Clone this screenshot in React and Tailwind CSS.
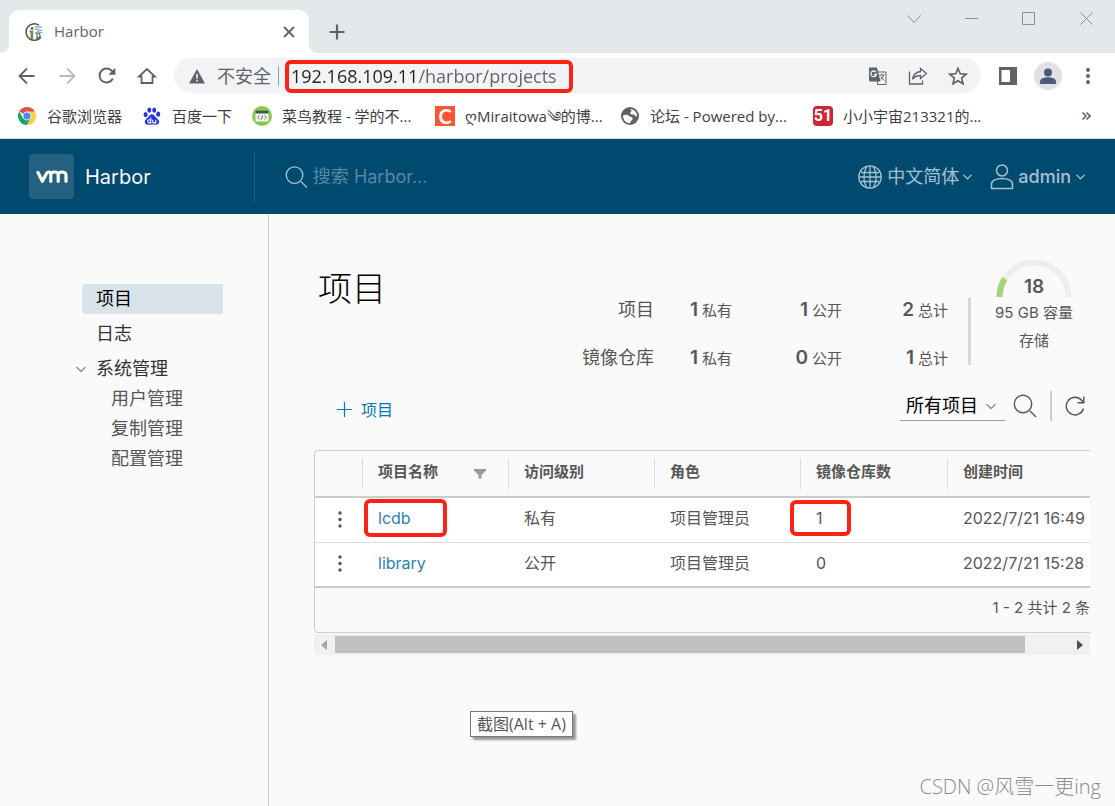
import { useState } from 'react'
import clsx from 'clsx'

const BOOKMARKS = [
  { icon: <ChromeIcon />, label: '谷歌浏览器' },
  { icon: <BaiduIcon />, label: '百度一下' },
  { icon: <RunoobIcon />, label: '菜鸟教程 - 学的不...' },
  { icon: <span className="flex h-5 w-5 shrink-0 items-center justify-center bg-[#fc5531] font-['Lato'] text-xl leading-5 font-bold text-white">C</span>, label: 'ღMiraitowa༄的博...' },
  { icon: <WorldIcon />, label: '论坛 - Powered by...' },
  { icon: <span className="flex h-5 w-5 shrink-0 items-center justify-center rounded-sm bg-[#cf2535] font-['Roboto'] text-base font-bold text-white">51</span>, label: '小小宇宙213321的...' },
]

const STATS = [
  { label: '项目', values: [1, 1, 2] },
  { label: '镜像仓库', values: [1, 0, 1] },
]

const PROJECTS = [
  { name: 'lcdb', access: '私有', role: '项目管理员', repos: 1, created: '2022/7/21 16:49', marked: true },
  { name: 'library', access: '公开', role: '项目管理员', repos: 0, created: '2022/7/21 15:28' },
]

const SUB_MENU = ['用户管理', '复制管理', '配置管理']

function ChromeIcon() {
  return (
    <svg viewBox="0 0 20 20" className="h-5 w-5 shrink-0">
      <path d="M10 10 L2.2 5.5 A9 9 0 0 1 17.8 5.5 Z" fill="#de5145" />
      <path d="M2.2 5.5 A9 9 0 0 0 10 19 L13.9 12.2 L6.1 12.2 Z" fill="#1da362" />
      <path d="M17.8 5.5 A9 9 0 0 1 10 19 L13.9 12.2 L10 5.5 Z" fill="#ffcd45" />
      <circle cx="10" cy="10" r="4.4" fill="#f1f1f1" />
      <circle cx="10" cy="10" r="3.5" fill="#4a8af4" />
    </svg>
  )
}

function BaiduIcon() {
  return (
    <svg viewBox="0 0 20 20" className="h-5 w-5 shrink-0" fill="#2a32e0">
      <ellipse cx="3.6" cy="8.6" rx="2" ry="2.6" />
      <ellipse cx="7.3" cy="4.1" rx="2" ry="2.7" />
      <ellipse cx="12.2" cy="4.1" rx="2" ry="2.7" />
      <ellipse cx="16.2" cy="8.2" rx="2" ry="2.6" />
      <path d="M9.9 8.2c2.2 0 2.9 2 4.2 3.3 1.3 1.3 3 2.3 3 4.3 0 2.1-1.6 3-3.5 2.9-1.3-.1-2.3-.3-3.7-.3s-2.4.3-3.7.3c-1.9 0-3.4-.9-3.4-2.9s1.7-3 3-4.3c1.3-1.3 1.9-3.3 4.1-3.3z" />
      <path d="M8.8 11.5v5.4H7.2a1.5 1.5 0 0 1 0-3h1.5M10.8 13.7v2.2q0 1 1 1h2v-3.2" fill="none" stroke="#fff" strokeWidth="1.1" />
    </svg>
  )
}

function RunoobIcon() {
  return (
    <svg viewBox="0 0 20 20" className="h-5 w-5 shrink-0">
      <circle cx="10" cy="10" r="10" fill="#8cc84b" />
      <rect x="3.5" y="4.5" width="13" height="11" rx="1" fill="#f0f4ea" />
      <path d="M3.5 7.4V5.5a1 1 0 0 1 1-1h11a1 1 0 0 1 1 1v1.9z" fill="#3b5757" />
      <path d="M7.5 9.5 5.5 11.4l2 1.9M12.5 9.5l2 1.9-2 1.9M10.7 9.3l-1.4 4.2" fill="none" stroke="#5d6d6d" />
    </svg>
  )
}

function WorldIcon() {
  return (
    <svg viewBox="0 0 20 20" className="h-5 w-5 shrink-0">
      <circle cx="10" cy="10" r="9" fill="#5f6368" />
      <path d="M3 9.5c1.5-.8 3.5-.8 5-.3 1.4.4 1.6 1.6 3 1.8 1.3.2 2 1 1.6 2.2-.3.9-1.3 1-1.7 2-.3.7-.6 1.5-1.3 2.1-3.6-.3-6.5-3.2-6.6-7.8z" fill="#fff" />
      <path d="M10.5 3c2.5.2 4.8 1.7 5.9 4 .5 1.2.7 2.2.6 3.4-1 .3-2-.1-2.3-1.1-.3-1-1.2-.8-2.2-.8-1.3 0-2.5-.6-2.3-1.8.1-.9 1.2-.9 1.3-1.7.1-.8-.9-.9-1-2z" fill="#fff" />
    </svg>
  )
}

function HarborIcon() {
  return (
    <svg viewBox="0 0 20 20" className="h-5 w-5" fill="none">
      <path d="M15 3.200A8.300 8.300 0 1 0 17 15" stroke="#4d4f52" strokeWidth="1.500" />
      <circle cx="8" cy="6.300" r="1.500" fill="#5a7a50" />
      <path d="M5.500 8.500h3.700V17H6.500v-6.500h-1z" fill="#5a9a45" />
      <path d="M11 5.500c2-2.500 4 1 7-.8M11 7.500c2.500-1.500 4 1.500 7.500 1M13 9c2 1.500 3 1.500 5.500 2" stroke="#7aa3cc" strokeWidth="1.100" />
      <path d="M11 11h2.500a2 2 0 0 1 0 5H12M13 11v6" stroke="#5b6a60" strokeWidth="1.200" />
    </svg>
  )
}

function Chevron({ className }) {
  return (
    <svg viewBox="0 0 12 12" className={className} fill="none" stroke="currentColor" strokeWidth="1.3">
      <path d="M1.5 4 6 8.5 10.5 4" />
    </svg>
  )
}

function SearchIcon() {
  return (
    <svg viewBox="0 0 24 24" className="h-6 w-6" fill="none" stroke="currentColor" strokeWidth="1.4">
      <circle cx="10" cy="10" r="8.7" />
      <path d="m17 17 6 6" />
    </svg>
  )
}

function RedBox({ className }) {
  return <span className={clsx('pointer-events-none absolute rounded-md border-4 border-[#fc2216]', className)} />
}

function TabStrip() {
  return (
    <div className="flex h-[53px] items-start bg-[#e5e8eb] text-[#5f6368]">
      <div className="flex h-2 w-[9px] shrink-0 self-end bg-white">
        <div className="h-full w-full rounded-br-lg bg-[#e5e8eb]" />
      </div>
      <div className="mt-[10px] flex h-[43px] w-[300px] items-center rounded-t-[10px] bg-white pr-[11px] pl-[15px]">
        <HarborIcon />
        <span className="ml-[10px] flex-1 text-[15px]">Harbor</span>
        <button aria-label="Close tab" className="p-[3px]">
          <svg viewBox="0 0 12 12" className="h-3 w-3" stroke="currentColor" strokeWidth="1.8">
            <path d="m1 1 10 10M11 1 1 11" />
          </svg>
        </button>
      </div>
      <div className="flex h-2 w-2 shrink-0 self-end bg-white">
        <div className="h-full w-full rounded-bl-lg bg-[#e5e8eb]" />
      </div>
      <button aria-label="New tab" className="mt-6 ml-3">
        <svg viewBox="0 0 16 16" className="h-4 w-4" stroke="currentColor" strokeWidth="2.2">
          <path d="M8 0.5v15M0.5 8h15" />
        </svg>
      </button>
      <div className="mt-3 mr-[21px] ml-auto flex gap-11 text-[#8b8e91]">
        <button aria-label="Search tabs">
          <svg viewBox="0 0 14 14" className="h-[14px] w-[14px]" fill="none" stroke="currentColor">
            <path d="M0.5 3.5 7 10.5 13.5 3.5" />
          </svg>
        </button>
        <button aria-label="Minimize">
          <svg viewBox="0 0 13 14" className="h-[14px] w-[13px]" stroke="currentColor"><path d="M0 6.5h13" /></svg>
        </button>
        <button aria-label="Maximize">
          <svg viewBox="0 0 14 14" className="h-[14px] w-[14px]" fill="none" stroke="currentColor"><path d="M0.5 0.5h12v12H0.5z" /></svg>
        </button>
        <button aria-label="Close">
          <svg viewBox="0 0 14 14" className="h-[14px] w-[14px]" stroke="currentColor"><path d="M0.5 0.5l12 12M12.5 0.5l-12 12" /></svg>
        </button>
      </div>
    </div>
  )
}

function AddressBar() {
  const [url, setUrl] = useState('192.168.109.11/harbor/projects')

  return (
    <div className="flex h-[45px] items-center bg-white pr-[18px] pl-[17px] text-[#5f6368]">
      <div className="flex gap-5">
        <button aria-label="Back">
          <svg viewBox="0 0 20 20" className="h-5 w-5" fill="none" stroke="currentColor" strokeWidth="1.8"><path d="M17.5 10H3M10 2.5 2.5 10l7.5 7.5" /></svg>
        </button>
        <button aria-label="Forward" className="text-[#babcbe]">
          <svg viewBox="0 0 20 20" className="h-5 w-5" fill="none" stroke="currentColor" strokeWidth="1.8"><path d="M2.5 10H17M10 2.5 17.5 10 10 17.5" /></svg>
        </button>
        <button aria-label="Reload">
          <svg viewBox="0 0 20 20" className="h-5 w-5" fill="none" stroke="currentColor" strokeWidth="1.9">
            <path d="M15.9 12.5A7 7 0 1 1 15.3 5.4" />
            <path d="M18.4 1.8v7h-7z" fill="currentColor" stroke="none" />
          </svg>
        </button>
        <button aria-label="Home">
          <svg viewBox="0 0 20 20" className="h-5 w-5" fill="none" stroke="currentColor" strokeWidth="1.8"><path d="M2 10.5 10 3l8 7.500h-2.500V17h-11v-6.500z" /></svg>
        </button>
      </div>
      <div className="ml-[17px] flex h-[35px] flex-1 items-center rounded-full bg-[#f1f3f4] pr-[13px] pl-[14px]">
        <svg viewBox="0 0 18 18" className="h-[18px] w-[18px]">
          <path d="M9 2 17 16.5H1z" fill="#5f6368" />
          <path d="M9 7v4.5M9 12.8v1.7" stroke="#f1f3f4" strokeWidth="1.6" />
        </svg>
        <span className="ml-[11px] text-lg">不安全</span>
        <span className="ml-[7px] h-5 w-px bg-[#9aa0a6]" />
        <div className="relative ml-3 flex-1">
          <input
            aria-label="Address"
            value={url}
            onChange={(e) => setUrl(e.target.value)}
            className="w-full bg-[linear-gradient(to_right,#202124_127px,#5f6368_127px)] bg-clip-text text-lg text-transparent outline-none"
          />
          <RedBox className="-top-[2px] -left-[6px] h-[33px] w-[288px]" />
        </div>
        <div className="flex gap-5">
          <button aria-label="Translate">
            <svg viewBox="0 0 20 20" className="h-5 w-5" fill="none" stroke="currentColor">
              <path d="M9 6h9v12.5h-8.5z" />
              <path d="M1 1.5h8l3.5 14H2.5A1.5 1.5 0 0 1 1 14z" fill="#5f6368" stroke="none" />
              <path d="M8 6.2A2.8 2.8 0 1 0 8.4 8.5H6" stroke="#f1f3f4" strokeWidth="1.3" />
              <path d="M11.5 9h5M14 7.8V9M15.8 9c-.5 2-2 3.5-3.3 4.3M12.7 10.5l3.5 4" />
            </svg>
          </button>
          <button aria-label="Share">
            <svg viewBox="0 0 20 20" className="h-5 w-5" fill="none" stroke="currentColor" strokeWidth="1.3">
              <path d="M1.5 5.5v12.5h13v-3.5" />
              <path d="M12.5 2.5 18.5 7.5l-6 5V9.5c-3.5 0-6 1-8 3.8.8-4.2 3.3-7.3 8-7.8z" />
            </svg>
          </button>
          <button aria-label="Bookmark">
            <svg viewBox="0 0 20 20" className="h-5 w-5" fill="none" stroke="currentColor" strokeWidth="1.7">
              <path d="M10 2.5l2.3 5.3 5.7.5-4.3 3.8 1.3 5.6L10 14.7l-5 3 1.3-5.6L2 8.3l5.7-.5z" />
            </svg>
          </button>
        </div>
      </div>
      <button aria-label="Side panel" className="ml-[18px]">
        <svg viewBox="0 0 18 18" className="h-[18px] w-[18px]">
          <path d="M0 0h18v18H0z" fill="#5f6368" />
          <path d="M2.5 3h8.5v12H2.5z" fill="#fff" />
        </svg>
      </button>
      <button aria-label="Profile" className="ml-[17px]">
        <svg viewBox="0 0 28 28" className="h-7 w-7">
          <circle cx="14" cy="14" r="14" fill="#dee1e6" />
          <circle cx="14" cy="10.5" r="4" fill="#4c5a74" />
          <path d="M6 22v-2.5c0-3 5-4.2 8-4.2s8 1.2 8 4.2V22z" fill="#4c5a74" />
        </svg>
      </button>
      <button aria-label="Menu" className="ml-[17px]">
        <svg viewBox="0 0 18 18" className="h-[18px] w-[18px]" fill="currentColor">
          <circle cx="9" cy="3" r="2" />
          <circle cx="9" cy="9" r="2" />
          <circle cx="9" cy="15" r="2" />
        </svg>
      </button>
    </div>
  )
}

function Bookmarks() {
  return (
    <div className="flex h-[41px] items-center border-b border-[#d5d8db] bg-white pr-6 pb-1 pl-[17px] text-[15px] text-[#3c4043]">
      <div className="grid grid-cols-[105px_90px_163px_165px_173px_auto] gap-5">
        {BOOKMARKS.map((b) => (
          <a key={b.label} href="#" className="flex items-center gap-[10px] whitespace-nowrap">
            {b.icon}
            {b.label}
          </a>
        ))}
      </div>
      <button aria-label="More bookmarks" className="ml-auto">
        <svg viewBox="0 0 10 10" className="h-[10px] w-[10px]" fill="none" stroke="#5f6368" strokeWidth="1.6">
          <path d="M1.5 1.5 5 5 1.5 8.5M5.5 1.5 9 5 5.5 8.5" />
        </svg>
      </button>
    </div>
  )
}

function HarborHeader() {
  return (
    <header className="flex h-[75px] items-center bg-[#004a70] pr-[29px] pl-[29px] text-lg text-[#a6c1ce]">
      <a href="#" className="flex w-[225px] items-center text-xl text-[#fafafa]">
        <span className="mr-[11px] flex h-[45px] w-[45px] items-center justify-center rounded bg-[#24607f]">
          <svg viewBox="0 0 32 14" className="h-[14px] w-8" fill="none" stroke="#fff" strokeWidth="3.2" strokeLinecap="round" strokeLinejoin="round">
            <path d="M2 2.5 6.4 11.3 10.5 3.5Q11.3 2 13 2 14.8 2 14.8 4.500V11.300M14.800 5Q14.800 2 18.500 2T22.200 5V11.300M22.200 5Q22.200 2 26 2T30 5V11.300" />
          </svg>
        </span>
        Harbor
      </a>
      <div className="flex h-[50px] flex-1 items-center border-l border-[#1d5e80] pl-[30px]">
        <SearchIcon />
        <input aria-label="搜索" placeholder="搜索 Harbor..." className="ml-[5px] w-full outline-none placeholder:text-[#5589a3]" />
      </div>
      <button className="flex items-center">
        <svg viewBox="0 0 24 24" className="h-6 w-6" fill="none" stroke="currentColor" strokeWidth="1.3">
          <circle cx="12" cy="12" r="11.2" />
          <path d="M12 1v22M3 7.5h18M1 12h22M3 16.5h18M9 1.3C5 7 5 17 9 22.7M15 1.3c4 5.7 4 15.7 0 21.4" />
        </svg>
        <span className="ml-[5px] whitespace-nowrap">中文简体</span>
        <Chevron className="ml-[3px] h-[11px] w-[11px]" />
      </button>
      <button className="ml-[17px] flex items-center">
        <svg viewBox="0 0 24 26" className="h-[26px] w-6" fill="none" stroke="currentColor" strokeWidth="1.5">
          <circle cx="12" cy="6.5" r="5.5" />
          <path d="M1.5 24.5v-4.5c0-3.5 5-5.5 10.5-5.5s10.5 2 10.5 5.5v4.5z" strokeLinejoin="round" />
        </svg>
        <span className="ml-1 font-medium">admin</span>
        <Chevron className="ml-1 h-[11px] w-[11px]" />
      </button>
    </header>
  )
}

function Sidebar() {
  return (
    <nav className="w-[269px] shrink-0 border-r border-[#ccc] pt-[70px] pr-[45px] pl-[75px] text-lg leading-[30px] text-[#313131]">
      <a href="#" className="ml-[7px] block rounded-l-[4px] bg-[#d9e4ea] pl-[14px] text-black">项目</a>
      <a href="#" className="mt-[5px] block pl-[21px]">日志</a>
      <button className="mt-[5px] flex items-center">
        <Chevron className="mr-[9px] h-3 w-3 text-[#8c8c8c]" />
        系统管理
      </button>
      {SUB_MENU.map((item) => (
        <a key={item} href="#" className="block pl-[36px] text-[#565656]">{item}</a>
      ))}
    </nav>
  )
}

function Stat({ value, label }) {
  return (
    <div className="flex items-baseline justify-end gap-1 text-[15px]">
      <span className="text-[19px] font-semibold">{value}</span>
      {label}
    </div>
  )
}

function Summary() {
  return (
    <div className="flex items-start justify-between pr-[14px]">
      <h1 className="mt-[5px] ml-1 text-[34px] leading-[50px] font-light text-black">项目</h1>
      <div className="flex">
        <div className="mt-[27px]">
          {STATS.map((s) => (
            <div key={s.label} className="grid h-12 grid-cols-[80px_78px_110px_106px] items-center">
              <span className="text-right text-lg">{s.label}</span>
              <Stat value={s.values[0]} label="私有" />
              <Stat value={s.values[1]} label="公开" />
              <Stat value={s.values[2]} label="总计" />
            </div>
          ))}
        </div>
        <div className="mt-[39px] ml-5 h-[67px] w-[3px] bg-[#d8d8d8]" />
        <div className="ml-[21px] w-[84px] text-center text-[15px] leading-7 whitespace-nowrap">
          <div className="relative">
            <svg viewBox="0 0 76 38" className="mx-auto h-[38px] w-[76px]" fill="none" strokeWidth="6">
              <path d="M3.5 38A34.5 34.5 0 0 1 72.5 38" stroke="#eee" />
              <path d="M3.5 38A34.5 34.5 0 0 1 8.8 19.6" stroke="#a5d577" />
            </svg>
            <span className="absolute inset-x-0 bottom-0 text-[19px] leading-5 font-semibold">18</span>
          </div>
          <div className="mt-[2px]">95 GB 容量</div>
          <div>存储</div>
        </div>
      </div>
    </div>
  )
}

function Toolbar() {
  return (
    <div className="mt-[6px] flex h-9 items-center justify-between">
      <button className="flex items-center pt-[7px] pl-[23px] text-base text-[#0079b8]">
        <svg viewBox="0 0 15 15" className="mr-[9px] h-[15px] w-[15px]" stroke="currentColor" strokeWidth="1.2"><path d="M7.5 0v15M0 7.5h15" /></svg>
        项目
      </button>
      <div className="flex items-center text-[#565656]">
        <div className="relative mr-2 w-[105px] border-b border-[#9a9a9a]">
          <select aria-label="项目筛选" className="w-full appearance-none pl-[6px] text-lg text-black outline-none">
            <option>所有项目</option>
          </select>
          <Chevron className="pointer-events-none absolute top-2 right-2 h-3 w-3 text-[#8c8c8c]" />
        </div>
        <button aria-label="搜索"><SearchIcon /></button>
        <span className="mx-[13px] h-[30px] w-[2px] bg-[#ccc]" />
        <button aria-label="刷新" className="mr-[5px]">
          <svg viewBox="0 0 20 22" className="h-[22px] w-5" fill="none" stroke="currentColor" strokeWidth="1.4">
            <path d="M18.5 13.5A8.8 8.8 0 1 1 16.8 5.5L18.5 7.5M18.8 1.5v6.3h-6.3" />
          </svg>
        </button>
      </div>
    </div>
  )
}

function HeadCell({ children }) {
  return (
    <th className="p-0 text-left align-middle font-semibold">
      <div className="flex h-[31px] items-start border-l border-[#ddd] pr-[22px] pl-[15px] leading-7">{children}</div>
    </th>
  )
}

function ProjectTable() {
  return (
    <div className="mt-[26px]">
      <div className="overflow-hidden">
        <div className="w-[825px] overflow-hidden rounded border border-[#ccc]">
          <table className="w-full table-fixed border-collapse">
            <colgroup>
              <col className="w-[47px]" />
              <col className="w-[146px]" />
              <col className="w-[146px]" />
              <col className="w-[146px]" />
              <col className="w-[147px]" />
              <col />
            </colgroup>
            <thead className="text-[15px]">
              <tr className="h-[46px] border-b-2 border-[#ccc]">
                <th />
                <HeadCell>
                  <span className="flex-1">项目名称</span>
                  <button aria-label="筛选" className="mt-[11px]">
                    <svg viewBox="0 0 12 10" className="h-[10px] w-3" fill="#9a9a9a"><path d="M0 0h12v1.5L7.5 6v3.5h-3V6L0 1.5z" /></svg>
                  </button>
                </HeadCell>
                <HeadCell>访问级别</HeadCell>
                <HeadCell>角色</HeadCell>
                <HeadCell>镜像仓库数</HeadCell>
                <HeadCell>创建时间</HeadCell>
              </tr>
            </thead>
            <tbody className="bg-white text-base">
              {PROJECTS.map((p) => (
                <tr key={p.name} className="h-[45px] border-b border-[#ddd] last:border-b-2 last:border-[#ccc]">
                  <td className="pb-[2px] pl-[22px]">
                    <button aria-label="操作" className="block">
                      <svg viewBox="0 0 6 18" className="h-[18px] w-[6px]" fill="#565656">
                        <circle cx="3" cy="3" r="1.7" />
                        <circle cx="3" cy="9.5" r="1.7" />
                        <circle cx="3" cy="16" r="1.7" />
                      </svg>
                    </button>
                  </td>
                  <td className="relative pb-[3px] pl-4">
                    <a href="#" className="text-[#2e7fb0]">{p.name}</a>
                    {p.marked && <RedBox className="top-px left-[2px] h-[38px] w-[83px]" />}
                  </td>
                  <td className="pb-[3px] pl-4">{p.access}</td>
                  <td className="pb-[3px] pl-4">{p.role}</td>
                  <td className="relative pb-[3px] pl-4">
                    {p.repos}
                    {p.marked && <RedBox className="top-[2px] -left-[10px] h-[36px] w-[61px]" />}
                  </td>
                  <td className="pb-[3px] pl-4 whitespace-nowrap">{p.created}</td>
                </tr>
              ))}
            </tbody>
            <tfoot>
              <tr className="h-[45px]">
                <td colSpan={6} className="pr-12 pb-[3px] text-right text-[15px]">1 - 2 共计 2 条</td>
              </tr>
            </tfoot>
          </table>
        </div>
      </div>
      <div className="mt-px flex h-[21px] items-center bg-[#f1f1f1] px-[7px]">
        <svg viewBox="0 0 6 10" className="h-[10px] w-[6px]" fill="#a3a3a3"><path d="M6 0v10L0 5z" /></svg>
        <div className="mx-2 flex-1">
          <div className="h-[17px] w-[94%] bg-[#c1c1c1]" />
        </div>
        <svg viewBox="0 0 6 10" className="h-[10px] w-[6px]" fill="#505050"><path d="M0 0v10l6-5z" /></svg>
      </div>
    </div>
  )
}

function App() {
  return (
    <div className="relative flex min-h-screen flex-col bg-[#fafafa] font-['Open_Sans','Noto_Sans_CJK_SC',sans-serif]">
      <TabStrip />
      <AddressBar />
      <Bookmarks />
      <div className="flex flex-1 flex-col font-['Inter','Noto_Sans_CJK_SC',sans-serif] text-[#565656]">
        <HarborHeader />
        <div className="flex flex-1">
          <Sidebar />
          <main className="min-w-0 flex-1 pt-[45px] pr-[25px] pl-[45px]">
            <Summary />
            <Toolbar />
            <ProjectTable />
          </main>
        </div>
      </div>
      <div className="absolute top-[711px] left-[470px] border border-[#767676] bg-white px-[6px] text-base leading-6 text-[#565656] shadow-[3px_3px_2px_#999]">
        截图(Alt + A)
      </div>
      <div className="absolute right-[14px] bottom-[5px] text-xl font-light text-[#8c8c8c]">CSDN @风雪一更ing</div>
    </div>
  )
}

export default App
